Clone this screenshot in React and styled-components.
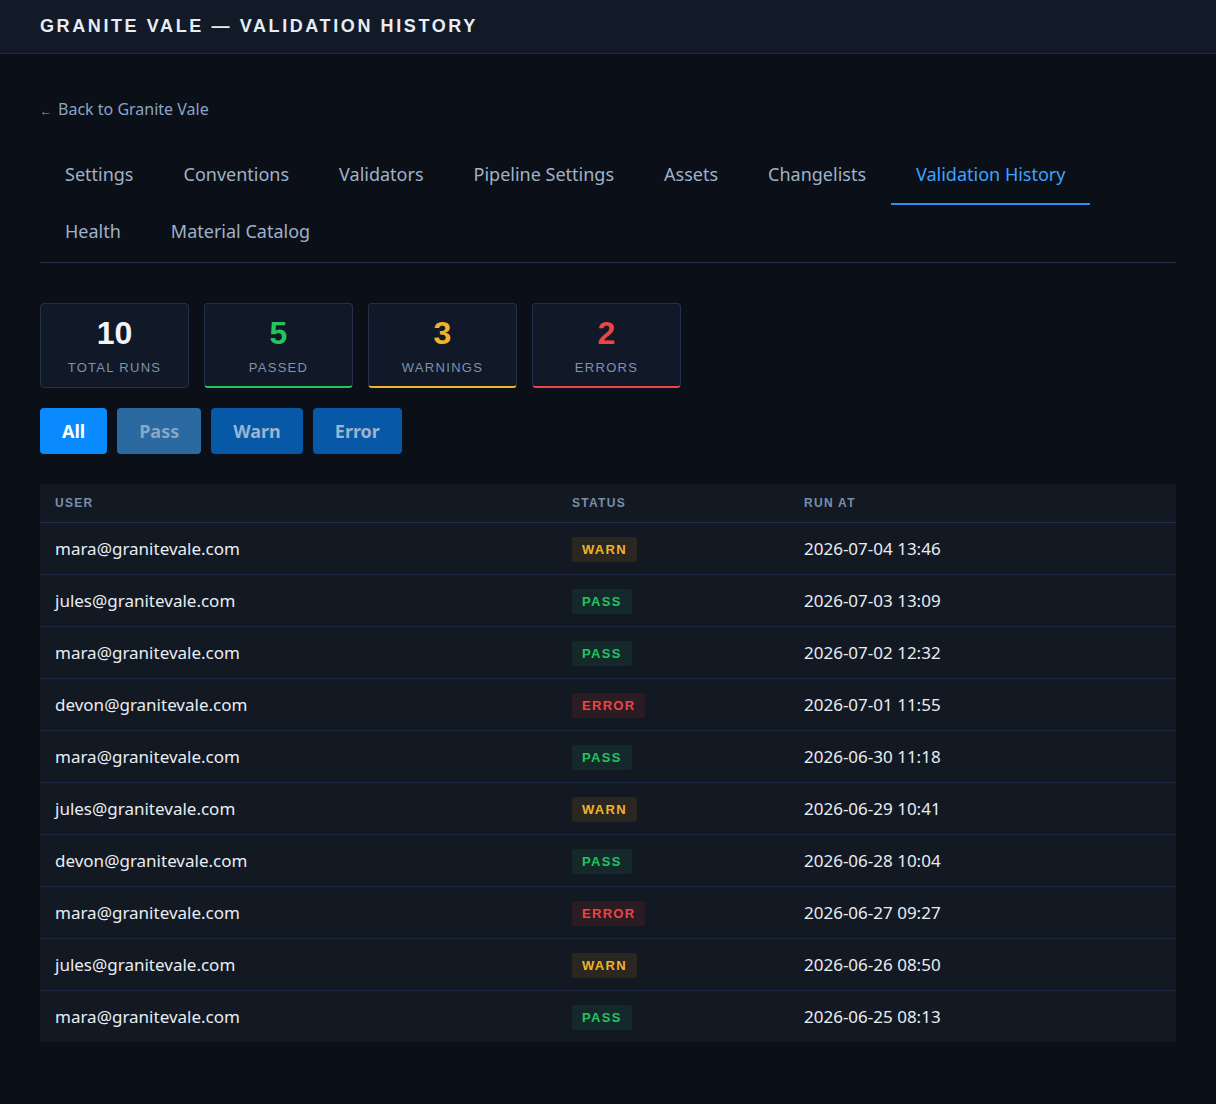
import React from "react";
import styled, { createGlobalStyle } from "styled-components";

const Global = createGlobalStyle`
  html, body { margin: 0; background: #0b0f17; }
  body { font-family: "Noto Sans", sans-serif; color: #e6edf3; }
`;

const Header = styled.header`
  height: 53px; background: #121927; border-bottom: 1px solid #1f2a3c;
  display: flex; align-items: center; padding: 0 40px;
  font-family: "Liberation Sans", Arial, sans-serif; font-weight: 700;
  font-size: 18px; letter-spacing: 2.6px; color: #e6edf3;
`;
const Main = styled.main`padding: 40px 40px 60px;`;
const Back = styled.a`
  display: inline-block; margin-top: 4px; color: #8aa4c4; font-size: 16px; text-decoration: none;
  span { font-size: 12px; margin-right: 6px; }
`;
const Tabs = styled.nav`
  display: flex; flex-wrap: wrap; margin-top: 28px; border-bottom: 1px solid #263348;
`;
const Tab = styled.div`
  padding: 14px 25px 14px; height: 57px; box-sizing: border-box; font-size: 18px;
  color: ${p => p.$active ? "#3ea2ff" : "#9fb2c8"};
  border-bottom: 2px solid ${p => p.$active ? "#2f8ff0" : "transparent"};
`;
const Stats = styled.div`display: flex; gap: 15px; margin-top: 40px;`;
const Stat = styled.div`
  width: 149px; height: 85px; box-sizing: border-box; background: #111827;
  border: 1px solid #243047; border-radius: 4px;
  ${p => p.$c ? `border-bottom: 2px solid ${p.$c};` : ""}
  display: flex; flex-direction: column; align-items: center; padding-top: 12px;
`;
const Num = styled.div`
  font-family: "Liberation Sans", Arial, sans-serif; font-weight: 700; font-size: 32px; line-height: 34px;
  color: ${p => p.$c || "#f1f5f9"};
`;
const Label = styled.div`
  font-family: "Liberation Sans", Arial, sans-serif; font-size: 13px; letter-spacing: 1.3px;
  color: #7f93ab; margin-top: 10px;
`;
const Filters = styled.div`display: flex; gap: 10px; margin-top: 20px;`;
const Btn = styled.button`
  height: 46px; border: none; border-radius: 4px; padding: 0 22px;
  font-family: "Noto Sans", sans-serif; font-weight: 700; font-size: 18px;
  background: ${p => p.$bg}; color: ${p => p.$fg};
`;
const Table = styled.table`
  width: 100%; margin-top: 30px; border-collapse: collapse; background: #131923;
`;
const Th = styled.th`
  text-align: left; padding: 0 15px; height: 38px; font-family: "Liberation Sans", Arial, sans-serif;
  font-weight: 700; font-size: 12px; letter-spacing: 1.3px; color: #7a8ea8;
  border-bottom: 1px solid #1e2d48; width: ${p => p.$w || "auto"};
`;
const Td = styled.td`
  padding: 0 15px; height: 51px; font-size: 17px; color: #e8edf3;
`;
const Tr = styled.tr`
  & + & td { border-top: 1px solid #1a2540; }
`;
const Badge = styled.span`
  display: inline-block; padding: 5px 10px; border-radius: 3px;
  font-family: "Liberation Sans", Arial, sans-serif; font-weight: 700; font-size: 13px; letter-spacing: 1.3px;
  color: ${p => p.$fg}; background: ${p => p.$bg};
`;

const badge = {
  WARN: ["#f0b429", "#2a2720"],
  PASS: ["#22c55e", "#14292a"],
  ERROR: ["#ef4444", "#2b1b22"],
};

const rows = [
  ["mara", "WARN", "2026-07-04 13:46"],
  ["jules", "PASS", "2026-07-03 13:09"],
  ["mara", "PASS", "2026-07-02 12:32"],
  ["devon", "ERROR", "2026-07-01 11:55"],
  ["mara", "PASS", "2026-06-30 11:18"],
  ["jules", "WARN", "2026-06-29 10:41"],
  ["devon", "PASS", "2026-06-28 10:04"],
  ["mara", "ERROR", "2026-06-27 09:27"],
  ["jules", "WARN", "2026-06-26 08:50"],
  ["mara", "PASS", "2026-06-25 08:13"],
];

const tabs = ["Settings", "Conventions", "Validators", "Pipeline Settings", "Assets", "Changelists", "Validation History", "Health", "Material Catalog"];

export default function App() {
  return (
    <>
      <Global />
      <Header>GRANITE VALE — VALIDATION HISTORY</Header>
      <Main>
        <Back href="#"><span>←</span>Back to Granite Vale</Back>
        <Tabs>
          {tabs.map(t => <Tab key={t} $active={t === "Validation History"}>{t}</Tab>)}
        </Tabs>
        <Stats>
          <Stat><Num>10</Num><Label>TOTAL RUNS</Label></Stat>
          <Stat $c="#22c55e"><Num $c="#22c55e">5</Num><Label>PASSED</Label></Stat>
          <Stat $c="#f0b429"><Num $c="#f0b429">3</Num><Label>WARNINGS</Label></Stat>
          <Stat $c="#ef4444"><Num $c="#ef4444">2</Num><Label>ERRORS</Label></Stat>
        </Stats>
        <Filters>
          <Btn $bg="#0a8aff" $fg="#ffffff">All</Btn>
          <Btn $bg="#2a6aa0" $fg="#8aa6c2">Pass</Btn>
          <Btn $bg="#0758a6" $fg="#9bb4cf">Warn</Btn>
          <Btn $bg="#0758a6" $fg="#9bb4cf">Error</Btn>
        </Filters>
        <Table>
          <thead>
            <tr><Th $w="487px">USER</Th><Th $w="202px">STATUS</Th><Th>RUN AT</Th></tr>
          </thead>
          <tbody>
            {rows.map(([u, s, d], i) => (
              <Tr key={i}>
                <Td>{u}@granitevale.com</Td>
                <Td><Badge $fg={badge[s][0]} $bg={badge[s][1]}>{s}</Badge></Td>
                <Td>{d}</Td>
              </Tr>
            ))}
          </tbody>
        </Table>
      </Main>
    </>
  );
}
